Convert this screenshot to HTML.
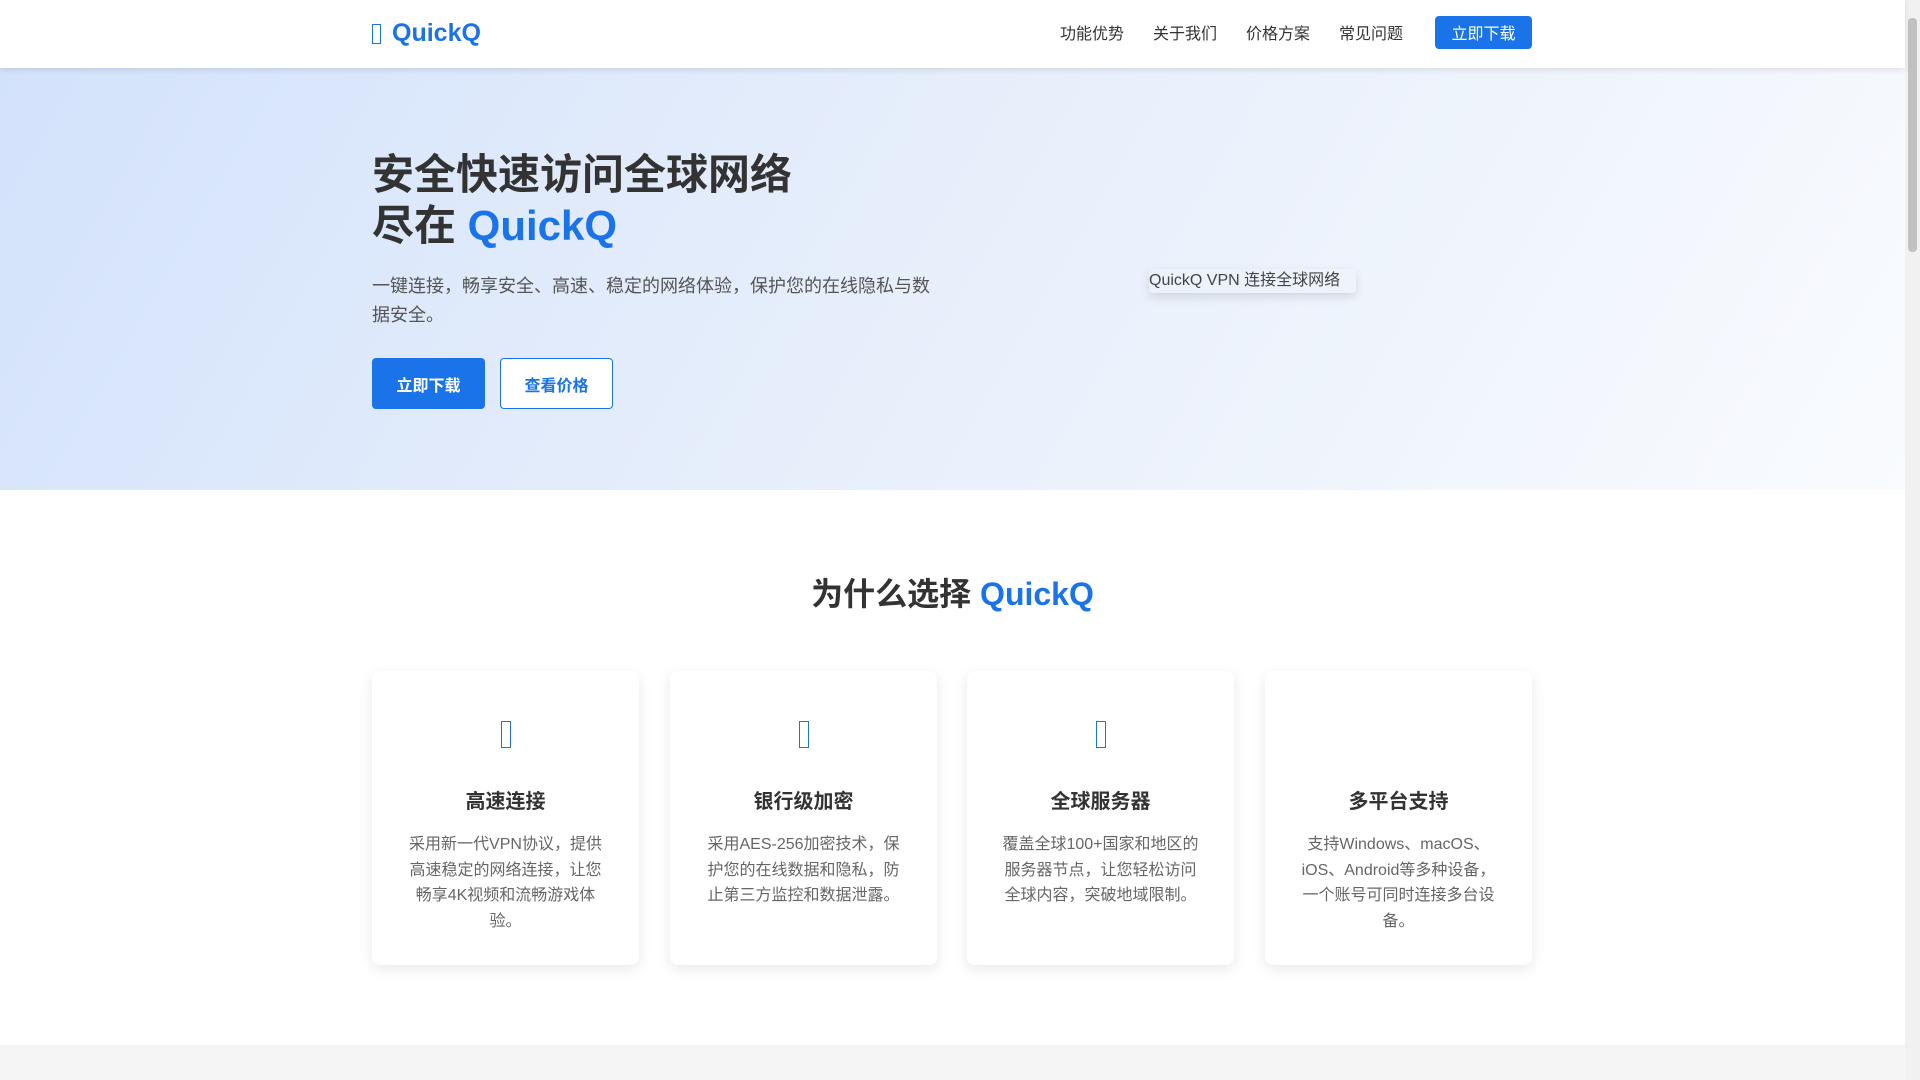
<!DOCTYPE html>
<html><head><meta charset="utf-8"><style>
*{margin:0;padding:0;box-sizing:border-box}
body{width:1920px;height:1080px;overflow:hidden;font-family:"Liberation Sans","Noto Sans CJK SC",sans-serif;background:#fff;position:relative;color:#333}
.page{width:1905px;position:absolute;left:0;top:0}
header{height:68px;background:#fff;box-shadow:0 2px 6px rgba(0,0,0,.1);position:relative;z-index:2}
.logo{position:absolute;left:372px;top:19px;font-size:25px;font-weight:bold;color:#1a73e8;display:flex;align-items:center}
.tofu{display:inline-block;border:1.5px solid #1a73e8;width:9px;height:20px;margin-right:11px}
nav{position:absolute;left:1060px;top:-2px;height:68px;display:flex;align-items:center;font-size:16px;color:#333}
nav span{margin-right:29px}
nav .btn{background:#1a73e8;color:#fff;width:97px;height:33px;border-radius:4px;display:flex;align-items:center;justify-content:center;margin-left:3px;margin-right:0}
.hero{height:422px;background:linear-gradient(120deg,#d3e2fb 0%,#e6eefb 45%,#f9fbfe 100%);position:relative}
h1{position:absolute;left:372px;top:81px;font-size:42px;line-height:51px;font-weight:bold;color:#333}
h1 b{color:#1a73e8}
.sub{position:absolute;left:372px;top:204px;width:570px;font-size:18px;line-height:29px;color:#555}
.b1,.b2{position:absolute;top:290px;height:51px;border-radius:4px;font-size:16px;font-weight:bold;display:flex;align-items:center;justify-content:center}
.b1{left:372px;width:113px;background:#1a73e8;color:#fff}
.b2{left:500px;width:113px;border:1.5px solid #1a73e8;color:#1a73e8;background:#fff}
.img{position:absolute;left:1149px;top:201px;width:207px;height:24px;font-size:16px;color:#444;box-shadow:0 4px 10px rgba(0,0,0,.12);border-radius:4px;line-height:24px;white-space:nowrap}
h2{position:absolute;left:0;width:1905px;top:569px;text-align:center;font-size:32px;font-weight:bold;color:#333}
h2 b{color:#1a73e8}
.card{position:absolute;top:671px;width:267px;height:294px;background:#fff;border-radius:8px;box-shadow:0 4px 14px rgba(0,0,0,.09);text-align:center}
.ico{position:absolute;top:50px;left:50%;margin-left:-5px;width:10px;height:27px;border:1.5px solid #1a73e8}
.card h3{position:absolute;top:114px;width:100%;font-size:20px;color:#333;font-weight:bold}
.card p{position:absolute;top:161px;left:34px;width:199px;font-size:16px;line-height:25.5px;color:#666}
.foot{position:absolute;top:1045px;left:0;width:1905px;height:35px;background:#f5f5f5}
.sb{position:absolute;right:0;top:0;width:15px;height:1080px;background:#f1f1f1}
.sb i{position:absolute;left:3px;top:18px;width:9px;height:234px;background:#c1c1c1;border-radius:4px}
</style></head><body>
<div class="page">
<header>
<div class="logo"><span class="tofu"></span>QuickQ</div>
<nav><span>功能优势</span><span>关于我们</span><span>价格方案</span><span>常见问题</span><span class="btn">立即下载</span></nav>
</header>
<div class="hero">
<h1>安全快速访问全球网络<br>尽在 <b>QuickQ</b></h1>
<div class="sub">一键连接，畅享安全、高速、稳定的网络体验，保护您的在线隐私与数据安全。</div>
<div class="b1">立即下载</div>
<div class="b2">查看价格</div>
<div class="img">QuickQ VPN 连接全球网络</div>
</div>
<h2>为什么选择 <b>QuickQ</b></h2>
<div class="card" style="left:372px"><div class="ico"></div><h3>高速连接</h3><p>采用新一代VPN协议，提供高速稳定的网络连接，让您畅享4K视频和流畅游戏体验。</p></div>
<div class="card" style="left:670px"><div class="ico"></div><h3>银行级加密</h3><p>采用AES-256加密技术，保护您的在线数据和隐私，防止第三方监控和数据泄露。</p></div>
<div class="card" style="left:967px"><div class="ico"></div><h3>全球服务器</h3><p>覆盖全球100+国家和地区的服务器节点，让您轻松访问全球内容，突破地域限制。</p></div>
<div class="card" style="left:1265px"><h3>多平台支持</h3><p>支持Windows、macOS、iOS、Android等多种设备，一个账号可同时连接多台设备。</p></div>
<div class="foot"></div>
</div>
<div class="sb"><i></i></div>
</body></html>
